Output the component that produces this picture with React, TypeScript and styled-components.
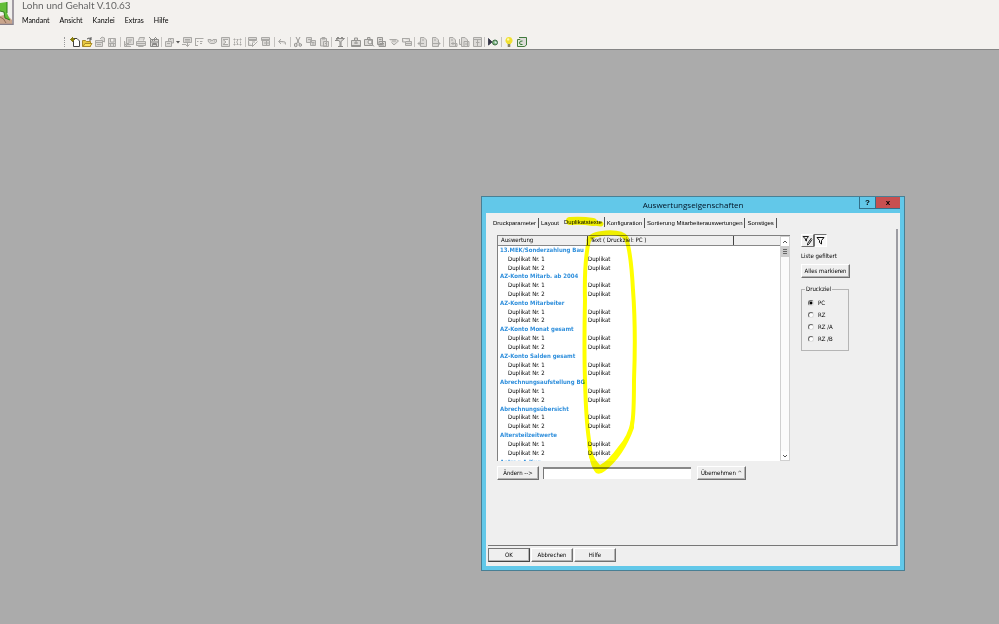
import React from 'react';
import styled, { createGlobalStyle, css } from 'styled-components';

const UI = '"DejaVu Sans Condensed", "Liberation Sans", sans-serif';
const HUMANIST = 'Lato, "Open Sans", sans-serif';
const FACE = '#efefef';

const GlobalStyle = createGlobalStyle`
  * { box-sizing: border-box; }
  html, body, #root { height: 100%; }
  body { margin: 0; background: #ababab; font: 6px/8px ${UI}; color: #000; overflow: hidden; }
  button, input { font: inherit; color: inherit; }
`;

const Shell = styled.div`
  display: flex;
  flex-direction: column;
  min-height: 100%;
`;

const Header = styled.header`
  display: grid;
  grid-template-columns: 14px 1fr;
  column-gap: 8px;
  height: 50px;
  background: #f3f1ee;
  border-bottom: 1px solid #858585;
`;

const HeaderText = styled.div`
  display: flex;
  flex-direction: column;
`;

const AppTitle = styled.h1`
  margin: 0;
  font: 400 10px/10px ${HUMANIST};
  color: #666;
`;

const MenuBar = styled.nav`
  display: flex;
  gap: 10px;
  margin-top: 4px;
  height: 12px;
`;

const MenuItem = styled.button`
  padding: 0;
  border: 0;
  background: none;
  font: 400 7px/12px ${HUMANIST};
  color: #000;
`;

const ToolBar = styled.div`
  display: flex;
  justify-content: space-between;
  align-items: center;
  width: 464px;
  height: 12px;
  margin: 10px 0 0 42px;
`;

const ToolButton = styled.button<{ $wide?: boolean }>`
  display: flex;
  width: ${p => (p.$wide ? 16 : 12)}px;
  height: 12px;
  padding: 0;
  border: 0;
  background: none;
`;

const ToolSeparator = styled.span`
  width: 1px;
  height: 10px;
  margin: 0 1px;
  background: #c4c2bf;
`;

const Grip = styled.span`
  width: 0;
  height: 10px;
  margin-right: 3px;
  border-left: 1px dotted #999;
`;

const Desktop = styled.main`
  position: relative;
  flex: 1;
`;

const Dialog = styled.section`
  position: absolute;
  left: 481px;
  top: 146px;
  width: 424px;
  padding: 0 4px 4px;
  border: 1px solid #487f94;
  background: #62c8e9;
`;

const TitleBar = styled.div`
  display: grid;
  grid-template-columns: 1fr auto 1fr;
  height: 16px;
`;

const DialogTitle = styled.h2`
  grid-column: 2;
  margin: 0;
  font: 400 8px/15px "Open Sans", sans-serif;
  color: #012;
`;

const WindowButtons = styled.div`
  display: flex;
  justify-content: flex-end;
`;

const WindowButton = styled.button<{ $close?: boolean }>`
  width: ${p => (p.$close ? 25 : 16)}px;
  height: 12px;
  padding: 0;
  border: solid #32708a;
  border-width: 0 0 1px 1px;
  background: ${p => (p.$close ? '#c75050' : '#62c8e9')};
  font: 700 8px/10px "Liberation Sans", sans-serif;
  color: #000;
`;

const DialogBody = styled.div`
  padding: 4px 2px 4px 2px;
  background: ${FACE};
`;

const TabList = styled.div`
  display: flex;
  padding-left: 3px;
  height: 12px;
`;

const Tab = styled.button<{ $active?: boolean; $bare?: boolean }>`
  height: 10px;
  margin: ${p => (p.$active ? 0 : 1)}px 0 0;
  padding: 0 2px;
  border: 0;
  border-right: 1px solid ${p => (p.$bare ? 'transparent' : '#555')};
  background: none;
  font: 400 6px/10px "Liberation Sans", sans-serif;
  white-space: nowrap;
`;

const Panel = styled.div`
  display: grid;
  grid-template-columns: 293px 1fr;
  column-gap: 11px;
  height: 317px;
  padding: 6px 9px 0;
  border-right: 2px solid #9c9ca2;
  border-bottom: 1px solid #777;
`;

const ListFrame = styled.div`
  display: grid;
  grid-template-columns: 1fr 10px;
  height: 226px;
  overflow: hidden;
  border: solid #808080;
  border-width: 1px 0 0 1px;
  background: #fff;
`;

const ListClip = styled.div`
  overflow: hidden;
`;

const Table = styled.table`
  width: 100%;
  height: 230px;
  border-collapse: collapse;
  table-layout: fixed;
`;

const HeadCell = styled.th<{ $width?: number }>`
  width: ${p => (p.$width ? `${p.$width}px` : 'auto')};
  height: 9px;
  padding: 0 3px;
  border-right: ${p => (p.$width ? '1px solid #444' : '0')};
  border-bottom: 1px solid #888;
  background: ${FACE};
  font-weight: 400;
  text-align: left;
  white-space: nowrap;
`;

const Cell = styled.td<{ $indent?: boolean }>`
  height: 8px;
  padding: 0 0 0 ${p => (p.$indent ? 10 : 1)}px;
  white-space: nowrap;
`;

const GroupCell = styled.td`
  height: 8px;
  padding: 0 0 0 2px;
  font-weight: 700;
  color: #2f8fdc;
  white-space: nowrap;
`;

const ScrollBar = styled.div`
  display: flex;
  flex-direction: column;
  justify-content: space-between;
  border: 1px solid #d0d0d0;
  background: #fbfbfb;
`;

const ScrollButton = styled.button`
  display: flex;
  align-items: center;
  justify-content: center;
  width: 100%;
  height: 9px;
  padding: 0;
  border: 0;
  background: #fff;
`;

const ScrollThumb = styled.div`
  display: flex;
  flex-direction: column;
  justify-content: center;
  gap: 1px;
  height: 11px;
  margin-bottom: auto;
  padding: 0 2px;
  background: #cdcdcd;
`;

const ThumbLine = styled.span`
  height: 1px;
  background: #666;
`;

const raised = css`
  border: solid;
  border-width: 1px;
  border-color: #fff #707070 #707070 #fff;
`;

const PushButton = styled.button<{ $width: number; $default?: boolean }>`
  width: ${p => p.$width}px;
  height: 14px;
  padding: 0;
  ${raised}
  ${p => p.$default && 'border-color: #777 #444 #444 #777;'}
  background: ${FACE};
  box-shadow: inset -1px -1px 0 #b4b4b4;
  white-space: nowrap;
`;

const EditRow = styled.div`
  display: flex;
  align-items: center;
  gap: 4px;
  margin-top: 5px;
`;

const TextField = styled.input`
  width: 148px;
  height: 12px;
  margin-right: 2px;
  padding: 0 2px;
  border: solid #777;
  border-width: 2px 0 0 1px;
  border-top-color: #888;
  background: #fff;
`;

const Side = styled.aside`
  display: flex;
  flex-direction: column;
  align-items: flex-start;
`;

const FilterButtons = styled.div`
  display: flex;
`;

const FilterButton = styled.button<{ $pressed?: boolean }>`
  display: flex;
  align-items: center;
  justify-content: center;
  width: 13px;
  height: 13px;
  margin-top: -1px;
  padding: 0;
  ${raised}
  ${p => p.$pressed && 'border-color: #707070 #fff #fff #707070;'}
  background: ${p => (p.$pressed ? '#f8f8f8' : FACE)};
`;

const Note = styled.p`
  margin: 5px 0 4px;
`;

const Group = styled.fieldset`
  display: flex;
  flex-direction: column;
  gap: 4px;
  width: 48px;
  margin: 7px 0 0;
  padding: 6px 6px 7px;
  border: 1px solid #b5b5b5;
`;

const Legend = styled.legend`
  margin-left: -3px;
  padding: 0 1px;
`;

const RadioLabel = styled.label`
  display: flex;
  align-items: center;
  gap: 4px;
  height: 8px;
`;

const Radio = styled.input`
  appearance: none;
  width: 6px;
  height: 6px;
  margin: 0;
  border: 1px solid;
  border-color: #666 #ddd #ddd #666;
  border-radius: 50%;
  background: #fff;
  &:checked { background: radial-gradient(circle, #000 0 1px, #fff 2px); }
`;

const Footer = styled.div`
  display: flex;
  gap: 1px;
  margin-top: 2px;
`;

const Marker = styled.svg`
  position: absolute;
  left: 560px;
  top: 160px;
  mix-blend-mode: multiply;
  pointer-events: none;
`;

const LogoSvg = styled.svg`
  display: block;
`;

const Logo = () => (
  <LogoSvg width="14" height="25" viewBox="0 0 14 25">
    <path d="M0 0H13V24H0Z" fill="#f0efec" />
    <path d="M0 16L4 15L8 16L12 20V24H0Z" fill="#c9a58c" />
    <path d="M0 17Q4 18 6 23" stroke="#8d6a55" strokeWidth="1" fill="none" />
    <path d="M0 3L7 2V13L10 20L5 18L4 12L0 11Z" fill="#62bd38" />
    <path d="M0 11L4 12L5 18L10 20M7 2V13" stroke="#2f7c1c" fill="none" />
    <path d="M13 0V24.5H0" stroke="#87808a" strokeWidth="1.5" fill="none" />
  </LogoSvg>
);

const G = '#aaa9a6';
const page = 'M3.5 1.5H7L9.5 4V10.5H3.5Z';

const icons = {
  new: (
    <g fill="none">
      <path d="M4.5 2.5H8L10.5 5V10.5H4.5Z" fill="#fff" stroke="#444" />
      <path d="M3.5 1V6M1 3.5H6M2 2L5 5M5 2L2 5" stroke="#8a8010" />
    </g>
  ),
  open: (
    <g>
      <path d="M1.5 10.5V4.5H4.5L5.5 5.5H9.5V10.5Z" fill="#e8c840" stroke="#a98a28" />
      <path d="M2 10.5L4 7.5H11L9 10.5Z" fill="#ffe45a" stroke="#a98a28" />
      <path d="M6 3Q8 1 10 3M10 1V4H8" stroke="#555" fill="none" />
    </g>
  ),
  props: <path d="M1.5 4.5H8.5V10.5H1.5ZM1.5 6.5H8M6 3L8 1L10.5 2V6L8.5 5M3 8.5H7" />,
  save: <path d="M2.5 2.5H9.5V10.5H2.5ZM4.5 2.5V6H8V2.5M3 7.5H9M4.5 8V10M7.5 8V10" />,
  preview: <path d="M3.5 1.5H10.5V8.5H3.5ZM5 4H9M5 6H8M1.5 5V10.5H8M2 8L4 10M3 7.5H6" />,
  print: <path d="M3.5 4.5L4.5 1.5H9.5L8.5 4.5M1.5 5.5H10.5V9.5H1.5ZM2 7.5H10M3.5 9.5V10.5H8.5" />,
  disk: <path d="M2.5 3.5H10.5V10.5H2.5ZM1 1L5 5M4 5L8 1M9 2L6 5M4.5 10V7.5H8.5V10M5 8.5H8M3 6H10" stroke="#8b8a88" />,
  shape: (
    <g>
      <path d="M1.5 5.5H7.5V10.5H1.5ZM4.5 5V2.5H9.5V7H8M6 4L8 2M3 7.5H6" />
      <path d="M12 5H16L14 7.5Z" fill="#555" stroke="none" />
    </g>
  ),
  monitor: <path d="M2.5 1.5H10.5V6.5H2.5ZM1 8.5H5M6.5 7V10.5M4.5 8.5L6.5 10.5L8.5 8.5M4 3.5H9M4 5H9" />,
  list: <path d="M2.5 2.5H10.5M2.5 2V10M4 5.5H5.5M7 5.5H9.5M2.5 9.5H5M7 7.5H9" />,
  mask: <path d="M2 3.5H5L6 5L7 3.5H10.5V6L8 7.5H4.5L2.5 6ZM4 5H5M8 5H9" />,
  sum: <path d="M2.5 1.5H10.5V10.5H2.5ZM9 3.5H4L7 6L4 8.5H9" />,
  grid: <path d="M2.5 3.5H10.5M2.5 8.5H10.5M3.5 2.5V9.5M9.5 2.5V9.5M6.5 3V5M6.5 7V9M5 6H8" strokeDasharray="2 1" />,
  filterDoc: <path d="M1.5 1.5H9.5V4.5H1.5ZM2 3.5H9M1.5 5V9.5H5M5.5 10.5L10.5 5.5M5 6H8M5.5 7V10.5" />,
  filterDoc2: <path d="M1.5 1.5H9.5V4.5H1.5ZM2 3.5H9M2.5 5V9.5H9.5V5M6.5 5V9M4 7H9" />,
  undo: <path d="M5 3L2.5 5.5L5 8M3 5.5H7.5Q10 5.5 9.5 8.5" />,
  cut: <path d="M4 1L7.5 8M8 1L4.5 8M2.5 9A1.3 1.3 0 1 0 5 9A1.3 1.3 0 1 0 2.5 9M7 9A1.3 1.3 0 1 0 9.6 9A1.3 1.3 0 1 0 7 9" stroke="#979693" />,
  copy: <path d="M1.5 1.5H6.5V6.5H1.5ZM5.5 4.5H10.5V9.5H5.5ZM3 3.5H6M7 6.5H9.5M7 8H9.5" />,
  paste: <path d="M2.5 2.5H8.5V10H2.5ZM4 1.5H7V3H4ZM5.5 5.5H10.5V10.5H5.5ZM7 7.5H9" />,
  funnel: <path d="M2 2.5H10.5L7 5.5V10.5H6V5.5L2 3M3 1.5H5M7 1.5H9M4 10.5H9M1 4.5H4" stroke="#8d8c89" />,
  case: <path d="M1.5 4.5H10.5V10.5H1.5ZM4.5 4V2H7.5V4M6 5V8M4 7H8M2 9.5H10" stroke="#979693" />,
  caseFind: <path d="M1.5 3.5H9.5V9.5H1.5ZM4.5 3V1.5H7V3M5 6A2 2 0 1 0 9 6A2 2 0 1 0 5 6M8.5 7.5L11 10.5" stroke="#979693" />,
  report: <path d="M2.5 1.5H7.5V8.5H2.5ZM4 3.5H6.5M4 5.5H10.5V10.5H4ZM5 7.5H9M5 9H9" stroke="#989794" />,
  check: <path d="M1.5 3.5H8.5L10.5 5L6 9L3.5 6.5M4 5H8" />,
  stack: <path d="M1.5 2.5H8.5V5M1.5 2V6H4M4.5 5.5H10.5V9.5H4.5ZM5 7.5H10" />,
  pageLeft: <path d={page + 'M1 7.5H7M3 5.5L1 7.5L3 9.5M5 4H7'} />,
  pageRight: <path d={page + 'M4 7.5H11M9 5.5L11 7.5L9 9.5M5 4H7'} />,
  pageDown: <path d={page + 'M5 4H7M5 7.5H11V10.5H5M7 6V9'} />,
  pages: <path d={page + 'M1.5 3V8.5H3M6 5.5H11V10.5H6ZM7 8H10'} />,
  table: <path d="M2.5 1.5H10.5V10.5H2.5ZM2 3.5H10M5 6.5H8.5M6.5 4V10" />,
  help: (
    <g>
      <path d="M1.5 2.5V9L5 6Z" fill="#334" stroke="#445" />
      <circle cx="8" cy="6.5" r="2.5" fill="#7fb57c" stroke="#3d6c48" />
      <path d="M7.5 6H9V7.5" stroke="#def" />
    </g>
  ),
  bulb: (
    <g stroke="none">
      <path d="M6 1A3.5 3.5 0 0 1 8 7.4V8H4V7.4A3.5 3.5 0 0 1 6 1Z" fill="#f0e030" />
      <circle cx="5.2" cy="3.4" r="1.2" fill="#fffbb0" />
      <path d="M4.7 8H7.3V11H4.7Z" fill="#8a8768" />
    </g>
  ),
  green: (
    <g>
      <path d="M1.5 3.5H8.5V10.5H1.5Z" fill="#dff0d8" stroke="#48793f" />
      <path d="M3 1.5H10.5V9L8.5 10.5" stroke="#3f7a3c" />
      <path d="M6.5 5Q3.5 4.5 3.5 7Q3.5 9 6.5 8.5" stroke="#2f7030" />
    </g>
  ),
};

type IconName = keyof typeof icons;

const Icon = ({ name, width = 12 }: { name: IconName; width?: number }) => (
  <svg width={width} height="12" viewBox={`0 0 ${width} 12`} fill="#dddbd8" stroke={G} aria-hidden="true">
    {icons[name]}
  </svg>
);

const toolGroups: IconName[][] = [
  ['new', 'open', 'props', 'save'],
  ['preview', 'print', 'disk'],
  ['shape', 'monitor', 'list', 'mask', 'sum', 'grid'],
  ['filterDoc', 'filterDoc2'],
  ['undo'],
  ['cut', 'copy', 'paste'],
  ['funnel'],
  ['case', 'caseFind', 'report', 'check', 'stack'],
  ['pageLeft', 'pageRight'],
  ['pageDown', 'pages', 'table'],
  ['help'],
  ['bulb', 'green'],
];

const tabs = ['Druckparameter', 'Layout', 'Duplikatstexte', 'Konfiguration', 'Sortierung Mitarbeiterauswertungen', 'Sonstiges'];

const reports = [
  '13.MEK/Sonderzahlung Bau',
  'AZ-Konto Mitarb. ab 2004',
  'AZ-Konto Mitarbeiter',
  'AZ-Konto Monat gesamt',
  'AZ-Konto Salden gesamt',
  'Abrechnungsaufstellung BG',
  'Abrechnungsübersicht',
  'Altersteilzeitwerte',
];

const Chevron = ({ down }: { down?: boolean }) => (
  <svg width="6" height="4" viewBox="0 0 6 4" fill="none" stroke="#555">
    <path d={down ? 'M1 1L3 3L5 1' : 'M1 3L3 1L5 3'} />
  </svg>
);

export default function App() {
  return (
    <Shell>
      <GlobalStyle />
      <Header>
        <Logo />
        <HeaderText>
          <AppTitle>Lohn und Gehalt V.10.63</AppTitle>
          <MenuBar>
            {['Mandant', 'Ansicht', 'Kanzlei', 'Extras', 'Hilfe'].map(m => (
              <MenuItem key={m}>{m}</MenuItem>
            ))}
          </MenuBar>
          <ToolBar role="toolbar">
            <Grip />
            {toolGroups.map((group, i) => (
              <React.Fragment key={i}>
                {i > 0 && <ToolSeparator />}
                {group.map(name => (
                  <ToolButton key={name} $wide={name === 'shape'} aria-label={name}>
                    <Icon name={name} width={name === 'shape' ? 16 : 12} />
                  </ToolButton>
                ))}
              </React.Fragment>
            ))}
          </ToolBar>
        </HeaderText>
      </Header>

      <Desktop>
        <Dialog role="dialog" aria-labelledby="dialog-title">
          <TitleBar>
            <DialogTitle id="dialog-title">Auswertungseigenschaften</DialogTitle>
            <WindowButtons>
              <WindowButton>?</WindowButton>
              <WindowButton $close aria-label="Schließen">x</WindowButton>
            </WindowButtons>
          </TitleBar>
          <DialogBody>
            <TabList role="tablist">
              {tabs.map((t, i) => (
                <Tab key={t} role="tab" aria-selected={i === 2} $active={i === 2} $bare={i === 1}>
                  {t}
                </Tab>
              ))}
            </TabList>
            <Panel role="tabpanel">
              <div>
                <ListFrame>
                  <ListClip>
                    <Table>
                      <thead>
                        <tr>
                          <HeadCell $width={89}>Auswertung</HeadCell>
                          <HeadCell $width={146}>Text ( Druckziel: PC )</HeadCell>
                          <HeadCell />
                        </tr>
                      </thead>
                      <tbody>
                        {reports.map(r => (
                          <React.Fragment key={r}>
                            <tr>
                              <GroupCell colSpan={3}>{r}</GroupCell>
                            </tr>
                            {[1, 2].map(n => (
                              <tr key={n}>
                                <Cell $indent>Duplikat Nr. {n}</Cell>
                                <Cell>Duplikat</Cell>
                                <Cell />
                              </tr>
                            ))}
                          </React.Fragment>
                        ))}
                        <tr>
                          <GroupCell colSpan={3}>Antrag A-Kug</GroupCell>
                        </tr>
                      </tbody>
                    </Table>
                  </ListClip>
                  <ScrollBar>
                    <ScrollButton aria-label="Nach oben"><Chevron /></ScrollButton>
                    <ScrollThumb><ThumbLine /><ThumbLine /><ThumbLine /></ScrollThumb>
                    <ScrollButton aria-label="Nach unten"><Chevron down /></ScrollButton>
                  </ScrollBar>
                </ListFrame>
                <EditRow>
                  <PushButton $width={42}>Ändern --&gt;</PushButton>
                  <TextField aria-label="Text" />
                  <PushButton $width={49}>Übernehmen ^</PushButton>
                </EditRow>
              </div>
              <Side>
                <FilterButtons>
                  <FilterButton aria-label="Filter bearbeiten">
                    <svg width="11" height="11" viewBox="0 0 11 11" fill="none" stroke="#222">
                      <path d="M1 1.5H6.5L4.5 4V6L3.5 5.5V4Z" />
                      <path d="M9.5 3L5.5 8.5V10L7 9L10 4.5" />
                    </svg>
                  </FilterButton>
                  <FilterButton $pressed aria-label="Filter">
                    <svg width="9" height="9" viewBox="0 0 9 9" fill="none" stroke="#111">
                      <path d="M1 1.5H8L5.5 4.5V8L3.5 6.5V4.5Z" />
                    </svg>
                  </FilterButton>
                </FilterButtons>
                <Note>Liste gefiltert</Note>
                <PushButton $width={49}>Alles markieren</PushButton>
                <Group>
                  <Legend>Druckziel</Legend>
                  {['PC', 'RZ', 'RZ /A', 'RZ /B'].map((r, i) => (
                    <RadioLabel key={r}>
                      <Radio type="radio" name="druckziel" defaultChecked={i === 0} />
                      {r}
                    </RadioLabel>
                  ))}
                </Group>
              </Side>
            </Panel>
            <Footer>
              <PushButton $width={42} $default>OK</PushButton>
              <PushButton $width={42}>Abbrechen</PushButton>
              <PushButton $width={42}>Hilfe</PushButton>
            </Footer>
          </DialogBody>
        </Dialog>
        <Marker width="90" height="270" viewBox="560 210 90 270" fill="none" stroke="#ff0" strokeLinecap="round" strokeLinejoin="round">
          <path d="M570 221Q582 220 593 222" strokeWidth="8" />
          <path d="M594 223L601 224" strokeWidth="5" />
          <path d="M589 240Q591 234 606 233Q622 232 626 238" strokeWidth="5" />
          <path d="M589 240Q584 262 585 300Q584 350 585 380Q586 420 589 440L591 457" strokeWidth="4" />
          <path d="M626 238Q631 252 633 290Q636 330 634 380Q634 415 632 425" strokeWidth="4" />
          <path
            d="M587 440Q589 466 596 473Q600 475 605 471Q624 456 634 428V420H631Q628 436 618 447Q608 461 600 465Q595 460 592 452L590 440Z"
            fill="#ff0"
            stroke="none"
          />
        </Marker>
      </Desktop>
    </Shell>
  );
}
